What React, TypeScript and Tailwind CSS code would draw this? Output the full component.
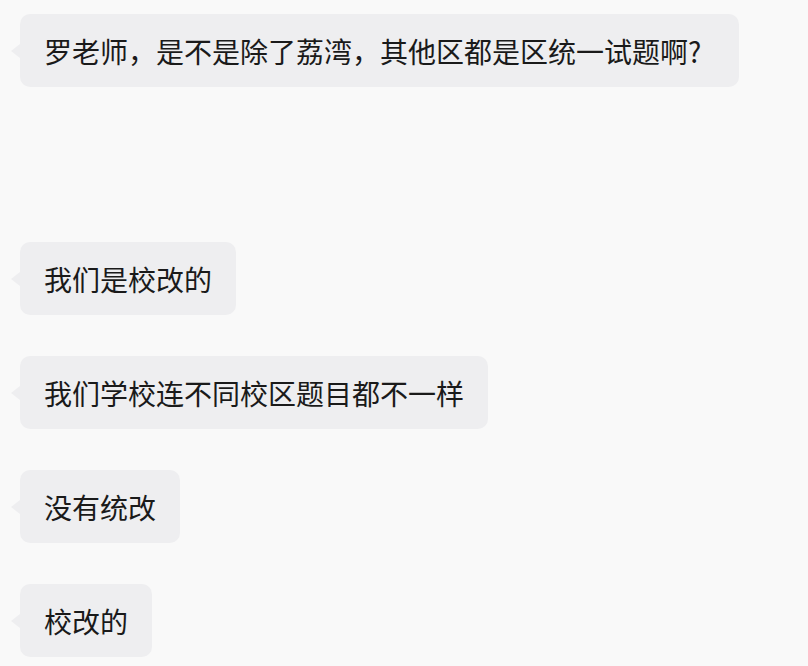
import React from "react";

const Bubble = ({ text, pr = "pr-6" }: { text: string; pr?: string }) => (
  <div className="relative ml-5 self-start">
    <div className="absolute left-[-9px] top-1/2 -translate-y-1/2 w-0 h-0 border-y-[7px] border-y-transparent border-r-[9px] border-r-[#eeeef0]" />
    <div className={`h-[73px] flex items-center rounded-[10px] bg-[#eeeef0] pl-6 ${pr} text-[28px] leading-none text-[#1a1a1a]`}>
      {text}
    </div>
  </div>
);

export default function App() {
  return (
    <div
      className="w-[808px] h-[666px] bg-[#f9f9f9] flex flex-col pt-[14px] overflow-hidden"
      style={{ fontFamily: '"Noto Sans CJK SC", "Noto Sans", sans-serif' }}
    >
      <Bubble text="罗老师，是不是除了荔湾，其他区都是区统一试题啊?" pr="pr-[38px]" />
      <div className="h-[155px] shrink-0" />
      <div className="flex flex-col gap-[41px]">
        <Bubble text="我们是校改的" />
        <Bubble text="我们学校连不同校区题目都不一样" />
        <Bubble text="没有统改" />
        <Bubble text="校改的" />
      </div>
    </div>
  );
}
